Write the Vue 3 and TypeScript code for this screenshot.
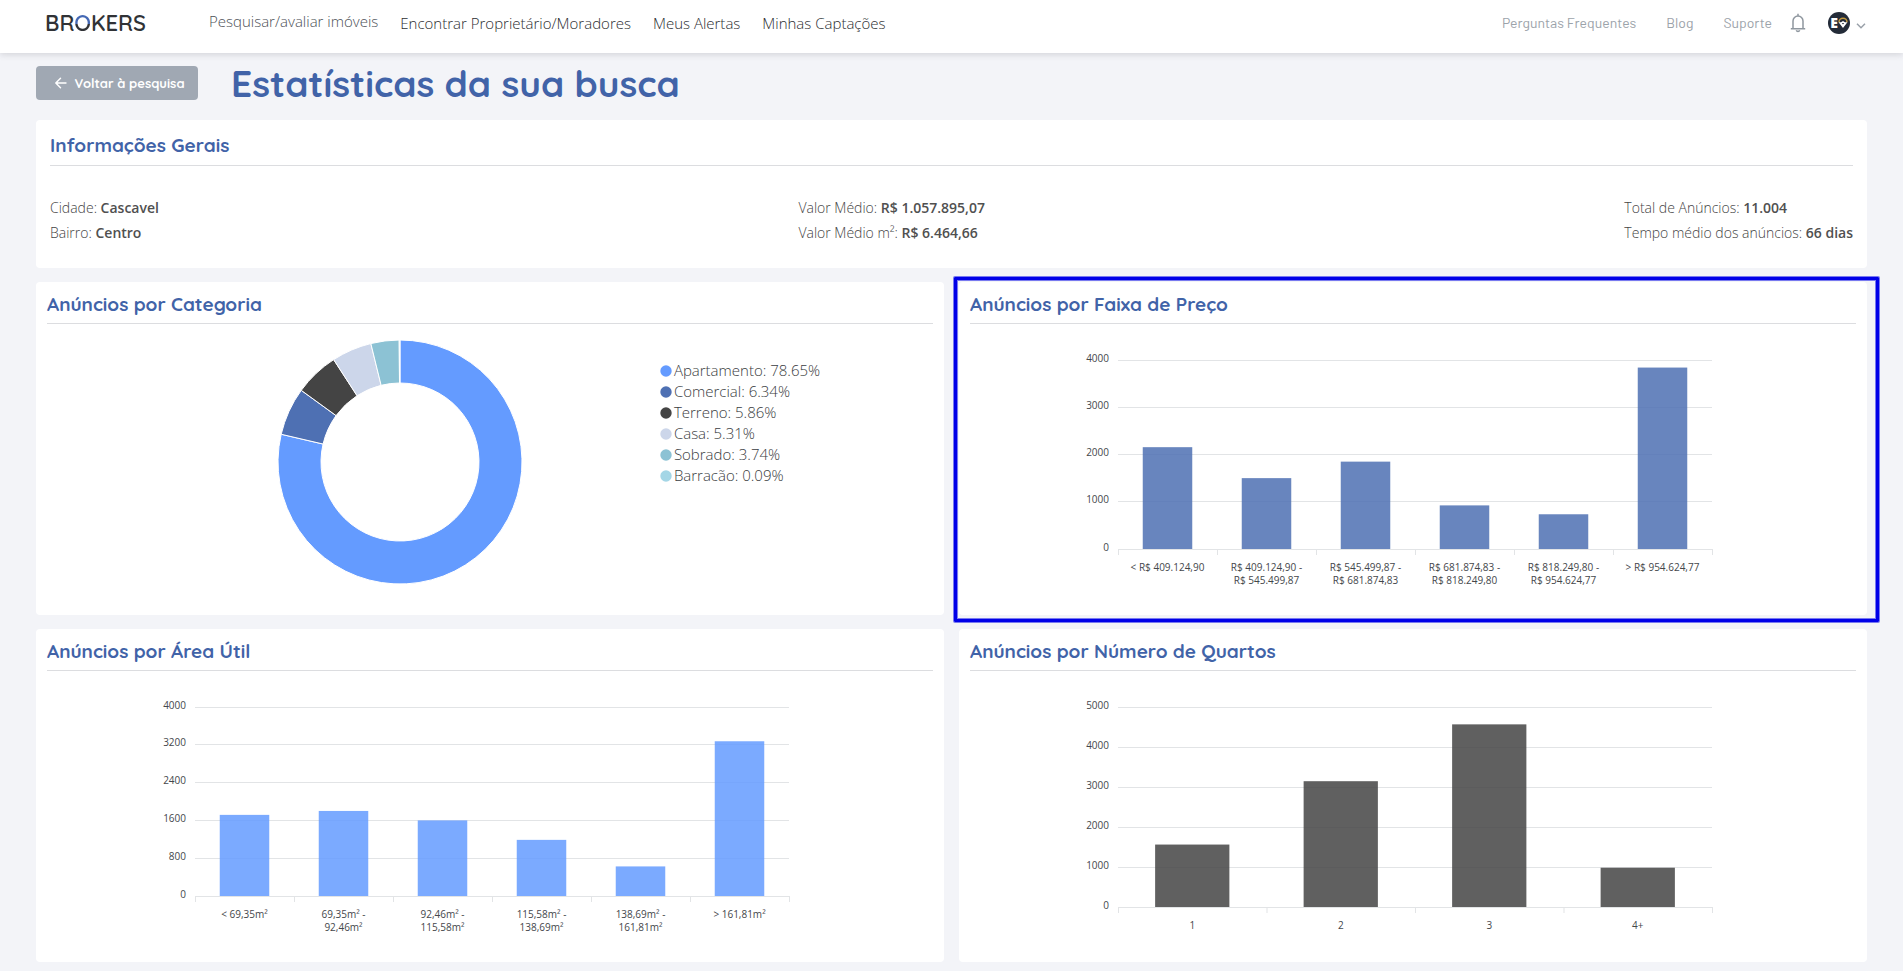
<script setup lang="ts">
interface BarDatum {
  lines: string[]
  value: number
}

interface BarPanel {
  title: string
  max: number
  step: number
  baseline: number
  color: string
  highlighted: boolean
  data: BarDatum[]
}

interface Slice {
  label: string
  percent: number
  color: string
}

const mainLinks = ['Encontrar Proprietário/Moradores', 'Meus Alertas', 'Minhas Captações']
const helpLinks = ['Perguntas Frequentes', 'Blog', 'Suporte']

const summary = [
  [
    { label: 'Cidade:', value: 'Cascavel' },
    { label: 'Bairro:', value: 'Centro' },
  ],
  [
    { label: 'Valor Médio:', value: 'R$ 1.057.895,07' },
    { label: 'Valor Médio m²:', value: 'R$ 6.464,66' },
  ],
  [
    { label: 'Total de Anúncios:', value: '11.004' },
    { label: 'Tempo médio dos anúncios:', value: '66 dias' },
  ],
]

const slices: Slice[] = [
  { label: 'Apartamento', percent: 78.65, color: '#649bff' },
  { label: 'Comercial', percent: 6.34, color: '#4e70b3' },
  { label: 'Terreno', percent: 5.86, color: '#444444' },
  { label: 'Casa', percent: 5.31, color: '#ccd6ea' },
  { label: 'Sobrado', percent: 3.74, color: '#8cc2d4' },
  { label: 'Barracão', percent: 0.09, color: '#a4d6e6' },
]

const panels: BarPanel[] = [
  {
    title: 'Anúncios por Faixa de Preço',
    max: 4000,
    step: 1000,
    baseline: 225,
    color: '#4e70b3',
    highlighted: true,
    data: [
      { lines: ['< R$ 409.124,90'], value: 2155 },
      { lines: ['R$ 409.124,90 -', 'R$ 545.499,87'], value: 1500 },
      { lines: ['R$ 545.499,87 -', 'R$ 681.874,83'], value: 1849 },
      { lines: ['R$ 681.874,83 -', 'R$ 818.249,80'], value: 923 },
      { lines: ['R$ 818.249,80 -', 'R$ 954.624,77'], value: 735 },
      { lines: ['> R$ 954.624,77'], value: 3840 },
    ],
  },
  {
    title: 'Anúncios por Área Útil',
    max: 4000,
    step: 800,
    baseline: 225,
    color: '#649bff',
    highlighted: false,
    data: [
      { lines: ['< 69,35m²'], value: 1717 },
      { lines: ['69,35m² -', '92,46m²'], value: 1800 },
      { lines: ['92,46m² -', '115,58m²'], value: 1600 },
      { lines: ['115,58m² -', '138,69m²'], value: 1188 },
      { lines: ['138,69m² -', '161,81m²'], value: 626 },
      { lines: ['> 161,81m²'], value: 3275 },
    ],
  },
  {
    title: 'Anúncios por Número de Quartos',
    max: 5000,
    step: 1000,
    baseline: 236,
    color: '#444444',
    highlighted: false,
    data: [
      { lines: ['1'], value: 1561 },
      { lines: ['2'], value: 3145 },
      { lines: ['3'], value: 4566 },
      { lines: ['4+'], value: 982 },
    ],
  },
]

const plotLeft = 40
const plotRight = 634
const plotTop = 36

function scaleY(panel: BarPanel, value: number): number {
  return panel.baseline - (value / panel.max) * (panel.baseline - plotTop)
}

function chartOf(panel: BarPanel) {
  const pitch = (plotRight - plotLeft) / panel.data.length
  const ticks = Array.from({ length: panel.max / panel.step + 1 }, (_, i) => {
    const value = i * panel.step
    return { value, y: Math.floor(scaleY(panel, value)) }
  })
  const bars = panel.data.map((d, i) => ({
    x: plotLeft + pitch * (i + 0.25),
    width: pitch / 2,
    center: plotLeft + pitch * (i + 0.5),
    y: scaleY(panel, d.value),
    height: panel.baseline - scaleY(panel, d.value),
    lines: d.lines,
  }))
  const marks = Array.from({ length: panel.data.length + 1 }, (_, i) => plotLeft + pitch * i)
  return { ...panel, ticks, bars, marks }
}

const charts = panels.map(chartOf)

function ringPoint(radius: number, turn: number): string {
  const angle = turn * 2 * Math.PI
  return `${122 + radius * Math.sin(angle)} ${122 - radius * Math.cos(angle)}`
}

let turned = 0
const ring = slices.map((s) => {
  const from = turned
  turned += s.percent / 100
  const to = Math.min(turned, 0.9999)
  const large = to - from > 0.5 ? 1 : 0
  return {
    color: s.color,
    path: `M${ringPoint(122, from)} A122 122 0 ${large} 1 ${ringPoint(122, to)} L${ringPoint(79, to)} A79 79 0 ${large} 0 ${ringPoint(79, from)} Z`,
  }
})
</script>

<template>
  <div class="page">
    <header class="topbar">
      <a class="logo" href="#">BR<span class="logo-o">O</span>KERS</a>
      <nav class="main-nav" aria-label="Principal">
        <a class="nav-search" href="#">Pesquisar/avaliar imóveis</a>
        <a v-for="link in mainLinks" :key="link" href="#">{{ link }}</a>
      </nav>
      <nav class="help-nav" aria-label="Ajuda">
        <a v-for="link in helpLinks" :key="link" href="#">{{ link }}</a>
      </nav>
      <button class="icon-button" type="button" aria-label="Notificações">
        <svg width="16" height="20" viewBox="0 0 16 20" fill="none" stroke="#8f979f" stroke-width="1.5">
          <path d="M3 15.600V8a5 5 0 0 1 10 0v7.600M.8 15.800h14.400M8 3V.8" />
          <path d="M6.300 17.200a1.800 1.800 0 0 0 3.400 0" />
        </svg>
      </button>
      <button class="account" type="button" aria-label="Conta">
        <span class="avatar">
          <span>E</span>
          <svg width="10" height="12" viewBox="0 0 10 12">
            <path d="M1 5.200a4 4 0 0 1 8 0" fill="none" stroke="#c39a3e" stroke-width="1.500" />
            <path d="M.6 5.200 5 11l4.400-5.800H7L5 4 3 5.200Z" fill="#fff" />
            <path d="m3.800 6 1.200 1.600L6.200 6Z" fill="#232b38" />
          </svg>
        </span>
        <svg class="chevron" width="10" height="6" viewBox="0 0 10 6" fill="none" stroke="#9aa1a9" stroke-width="1.500">
          <path d="m1 .8 4 4 4-4" />
        </svg>
      </button>
    </header>

    <main class="content">
      <div class="heading">
        <button class="back" type="button">
          <svg width="12" height="12" viewBox="0 0 12 12" fill="none" stroke="#fff" stroke-width="1.400" stroke-linecap="round" stroke-linejoin="round">
            <path d="M11 6H1M5.500 1.200.8 6l4.700 4.800" />
          </svg>
          Voltar à pesquisa
        </button>
        <h1>Estatísticas da sua busca</h1>
      </div>

      <section class="card info">
        <h2>Informações Gerais</h2>
        <div class="summary">
          <div v-for="(group, g) in summary" :key="g">
            <p v-for="item in group" :key="item.label">
              {{ item.label }} <strong>{{ item.value }}</strong>
            </p>
          </div>
        </div>
      </section>

      <div class="grid">
        <section class="card">
          <h2>Anúncios por Categoria</h2>
          <div class="donut">
            <svg width="244" height="244" viewBox="0 0 244 244" role="img" aria-label="Anúncios por Categoria">
              <path v-for="arc in ring" :key="arc.color" :d="arc.path" :fill="arc.color" stroke="#fff" stroke-width="1" />
            </svg>
            <ul>
              <li v-for="s in slices" :key="s.label">
                <svg width="12" height="12" viewBox="0 0 12 12"><circle cx="6" cy="6" r="5.700" :fill="s.color" /></svg>
                {{ s.label }}: {{ s.percent.toFixed(2) }}%
              </li>
            </ul>
          </div>
        </section>

        <section v-for="c in charts" :key="c.title" class="card" :class="{ highlighted: c.highlighted }">
          <h2>{{ c.title }}</h2>
          <svg class="bars" width="670" height="291" viewBox="0 0 670 291" role="img" :aria-label="c.title">
            <g v-for="t in c.ticks" :key="t.value">
              <rect :x="plotLeft" :y="t.y" :width="plotRight - plotLeft" height="1" fill="#e2e4e6" />
              <text x="31" :y="t.y + 2" text-anchor="end">{{ t.value }}</text>
            </g>
            <rect v-for="m in c.marks" :key="m" :x="m" :y="c.baseline" width="1" height="6" fill="#e2e4e6" />
            <g v-for="b in c.bars" :key="b.center">
              <rect :x="b.x" :y="b.y" :width="b.width" :height="b.height" :fill="c.color" fill-opacity="0.85" />
              <text v-for="(line, l) in b.lines" :key="line" :x="b.center" :y="c.baseline + 22 + l * 13" text-anchor="middle">{{ line }}</text>
            </g>
          </svg>
        </section>
      </div>
    </main>
  </div>
</template>

<style>
body {
  margin: 0;
  background: #f3f4f8;
}
</style>

<style scoped>
.page {
  min-height: 100vh;
  background: #f3f4f8;
  color: #444444;
  font-family: "Open Sans", "Noto Sans", sans-serif;
  font-size: 14px;
}
a {
  color: inherit;
  text-decoration: none;
}
button {
  border: 0;
  padding: 0;
  background: none;
  font: inherit;
  cursor: pointer;
}
svg {
  flex: none;
}
.topbar {
  display: flex;
  align-items: center;
  box-sizing: border-box;
  height: 53px;
  padding: 0 37px 8px 45px;
  background: #fff;
  box-shadow: 0 2px 6px rgba(60, 64, 72, 0.16);
}
.logo {
  min-width: 120px;
  color: #303236;
  font-family: Quicksand, Inter, sans-serif;
  font-size: 22px;
  font-weight: 600;
}
.logo-o {
  background: linear-gradient(#4468b4 52%, #303236 52%);
  background-clip: text;
  color: transparent;
}
.main-nav {
  display: flex;
  align-items: center;
  gap: 22px;
  margin-left: 44px;
  color: #2c2e31;
  font-size: 15px;
  font-weight: 300;
}
.nav-search {
  padding-bottom: 4px;
  color: #4b4f55;
}
.help-nav {
  display: flex;
  gap: 30px;
  margin-left: auto;
  color: #9ca3aa;
  font-family: Barlow, Roboto, sans-serif;
  font-size: 14px;
}
.icon-button {
  display: flex;
  margin-left: 18px;
}
.account {
  display: flex;
  align-items: center;
  gap: 6px;
  margin-left: 22px;
}
.avatar {
  display: flex;
  align-items: center;
  justify-content: center;
  width: 22px;
  height: 22px;
  border-radius: 50%;
  background: #232b38;
  color: #fff;
  font-size: 14px;
  font-weight: 800;
  line-height: 22px;
}
.chevron {
  margin-top: 6px;
}
.content {
  padding: 0 36px 9px;
}
.heading {
  display: flex;
  align-items: center;
  gap: 33px;
  height: 67px;
}
.back {
  display: flex;
  align-items: center;
  justify-content: center;
  gap: 7px;
  box-sizing: border-box;
  width: 162px;
  height: 34px;
  margin-bottom: 8px;
  padding-left: 6px;
  border-radius: 4px;
  background: #a0a8b3;
  color: #fff;
  font-family: Quicksand, Lato, sans-serif;
  font-size: 13px;
  font-weight: 700;
}
h1,
h2 {
  margin: 0;
  color: #4163a8;
  font-family: Quicksand, Lato, sans-serif;
  font-weight: 700;
}
h1 {
  margin-bottom: 8px;
  font-size: 37px;
  line-height: 50px;
}
h2 {
  height: 41px;
  border-bottom: 1px solid #dcdde0;
  font-size: 19px;
  line-height: 44px;
}
.card {
  position: relative;
  box-sizing: border-box;
  padding: 0 11px;
  border-radius: 4px;
  background: #fff;
}
.info {
  height: 148px;
  margin-bottom: 14px;
  padding: 4px 14px 0;
}
.info h2 {
  line-height: 42px;
}
.summary {
  display: flex;
  justify-content: space-between;
  padding-top: 29px;
  font-weight: 300;
}
strong {
  color: #505050;
  font-weight: 600;
}
p {
  margin: 0;
  line-height: 25px;
}
.grid {
  display: grid;
  grid-template-columns: 1fr 1fr;
  gap: 14px 15px;
}
.highlighted::after {
  content: "";
  position: absolute;
  inset: -5px -12px -7px -5px;
  border: 3px solid #0000e8;
  border-radius: 1px;
  box-shadow: 0 0 0 1px rgba(0, 0, 232, 0.5), inset 0 0 0 1px rgba(0, 0, 232, 0.5);
  pointer-events: none;
}
.bars {
  display: block;
  max-width: 100%;
  margin: 0 auto;
}
.bars text {
  fill: #44474b;
  font-size: 10px;
}
.donut {
  display: flex;
  justify-content: center;
  gap: 138px;
  padding: 16px 0 0 118px;
}
ul {
  margin: 0;
  padding: 20px 0 0;
  list-style: none;
}
li {
  display: flex;
  align-items: center;
  gap: 2px;
  color: #3a3d41;
  font-size: 15px;
  font-weight: 300;
  line-height: 21px;
  white-space: nowrap;
}
</style>
